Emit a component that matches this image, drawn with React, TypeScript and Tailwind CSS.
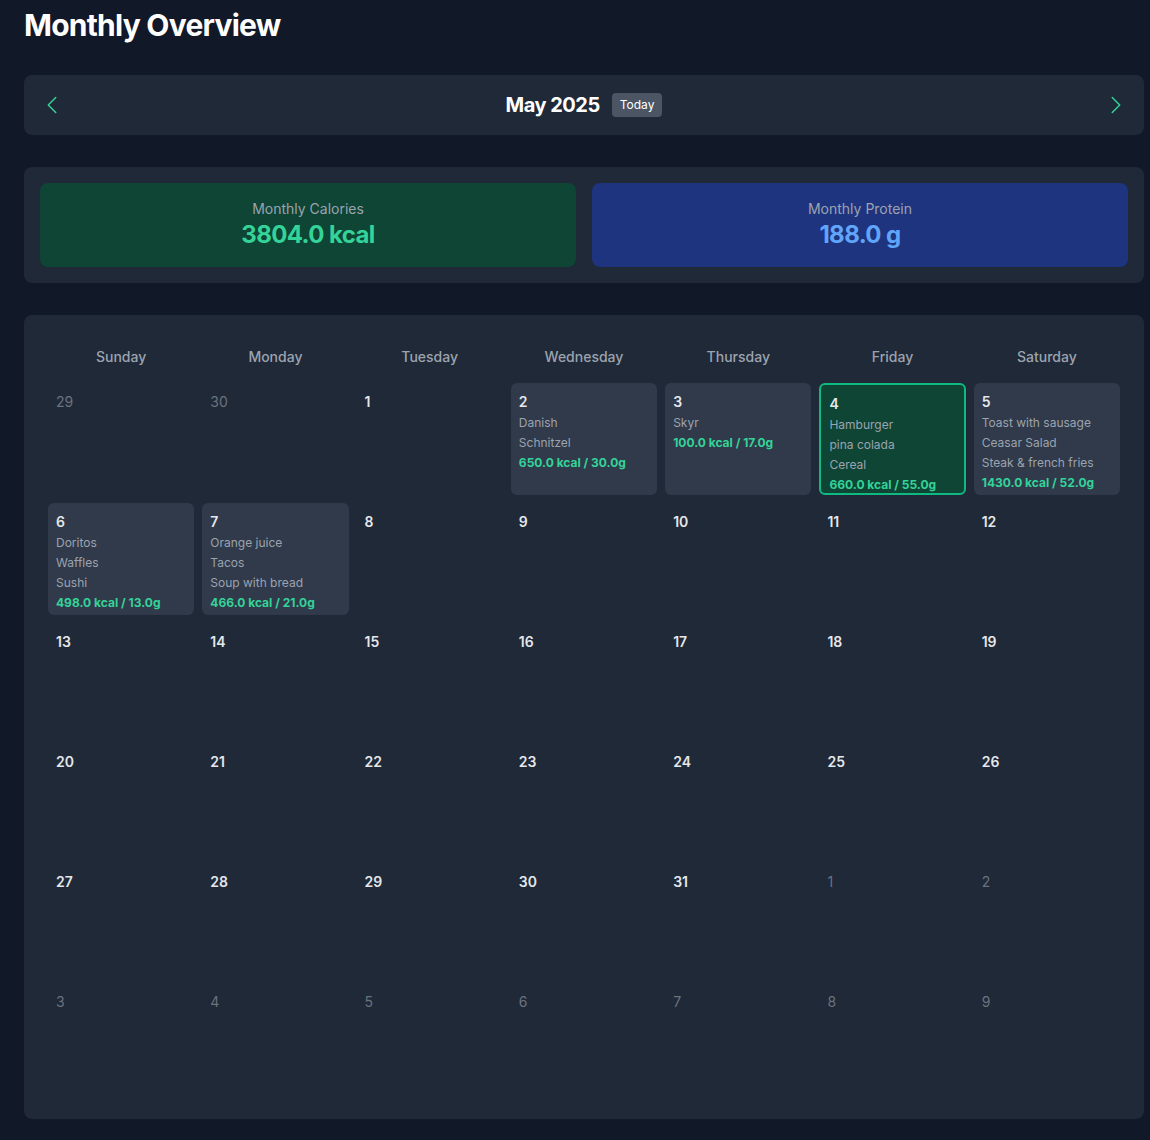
import React from 'react';

type Day = {
  day: number;
  inMonth: boolean;
  foods?: string[];
  kcal?: number;
  protein?: number;
  today?: boolean;
};

const weekDays = ['Sunday', 'Monday', 'Tuesday', 'Wednesday', 'Thursday', 'Friday', 'Saturday'];

// Meals logged per day of May 2025
const meals: { [day: number]: { foods: string[]; kcal: number; protein: number } } = {
  2: { foods: ['Danish', 'Schnitzel'], kcal: 650, protein: 30 },
  3: { foods: ['Skyr'], kcal: 100, protein: 17 },
  4: { foods: ['Hamburger', 'pina colada', 'Cereal'], kcal: 660, protein: 55 },
  5: { foods: ['Toast with sausage', 'Ceasar Salad', 'Steak & french fries'], kcal: 1430, protein: 52 },
  6: { foods: ['Doritos', 'Waffles', 'Sushi'], kcal: 498, protein: 13 },
  7: { foods: ['Orange juice', 'Tacos', 'Soup with bread'], kcal: 466, protein: 21 },
};

const buildDays = (): Day[] => {
  const days: Day[] = [];
  days.push({ day: 29, inMonth: false }, { day: 30, inMonth: false });
  for (let d = 1; d <= 31; d++) {
    const m = meals[d];
    days.push({ day: d, inMonth: true, ...(m || {}), today: d === 4 });
  }
  for (let d = 1; days.length < 42; d++) days.push({ day: d, inMonth: false });
  return days;
};

const ChevronLeft = () => (
  <svg xmlns="http://www.w3.org/2000/svg" fill="none" viewBox="0 0 24 24" strokeWidth={1.5} stroke="currentColor" className="w-6 h-6">
    <path strokeLinecap="round" strokeLinejoin="round" d="M15.75 19.5 8.25 12l7.5-7.5" />
  </svg>
);

const ChevronRight = () => (
  <svg xmlns="http://www.w3.org/2000/svg" fill="none" viewBox="0 0 24 24" strokeWidth={1.5} stroke="currentColor" className="w-6 h-6">
    <path strokeLinecap="round" strokeLinejoin="round" d="m8.25 4.5 7.5 7.5-7.5 7.5" />
  </svg>
);

const DayCell: React.FC<{ d: Day }> = ({ d }) => {
  const hasMeals = !!d.foods;
  let cls = 'h-[112px] rounded-md px-2 pt-[9px] pb-2';
  if (d.today) cls += ' border-2 border-[#10b981] bg-[#0e4535]';
  else if (hasMeals) cls += ' bg-[#303a4a]';
  return (
    <div className={cls}>
      <div className={d.inMonth ? 'text-sm leading-5 mb-px font-semibold text-[#e5e7eb]' : 'text-sm leading-5 mb-px text-[#6b7280]'}>{d.day}</div>
      {d.foods?.map(f => (
        <div key={f} className="text-xs leading-5 text-[#9ca3af]">{f}</div>
      ))}
      {hasMeals && (
        <div className="text-xs leading-5 font-bold text-[#34d399]">
          {d.kcal!.toFixed(1)} kcal / {d.protein!.toFixed(1)}g
        </div>
      )}
    </div>
  );
};

export default function App() {
  const days = buildDays();
  const totalKcal = Object.values(meals).reduce((a, m) => a + m.kcal, 0);
  const totalProtein = Object.values(meals).reduce((a, m) => a + m.protein, 0);

  return (
    <div className="min-h-screen bg-[#111827] text-white pt-[7px] pb-6" style={{ fontFamily: 'Inter, "Noto Sans", sans-serif' }}>
      <div className="ml-6 w-[1120px]">
        <h1 className="text-3xl font-bold tracking-tight mb-8">Monthly Overview</h1>

        <div className="bg-[#1f2937] rounded-lg p-4 flex items-center justify-between mb-8">
          <button className="text-[#34d399]"><ChevronLeft /></button>
          <div className="flex items-center gap-3">
            <span className="text-xl font-bold tracking-tight">May 2025</span>
            <span className="text-xs bg-[#4b5563] text-white px-2 py-1 rounded">Today</span>
          </div>
          <button className="text-[#34d399]"><ChevronRight /></button>
        </div>

        <div className="bg-[#1f2937] rounded-lg p-4 grid grid-cols-2 gap-4 mb-8">
          <div className="bg-[#0e4535] rounded-lg p-4 text-center">
            <div className="text-sm text-[#9ca3af]">Monthly Calories</div>
            <div className="text-2xl font-bold tracking-tight text-[#34d399]">{totalKcal.toFixed(1)} kcal</div>
          </div>
          <div className="bg-[#1e347f] rounded-lg p-4 text-center">
            <div className="text-sm text-[#9ca3af]">Monthly Protein</div>
            <div className="text-2xl font-bold tracking-tight text-[#60a5fa]">{totalProtein.toFixed(1)} g</div>
          </div>
        </div>

        <div className="bg-[#1f2937] rounded-lg p-6">
          <div className="grid grid-cols-7 gap-2">
            {weekDays.map(w => (
              <div key={w} className="py-2 text-center text-sm font-medium text-[#9ca3af]">{w}</div>
            ))}
            {days.map((d, i) => (
              <DayCell key={i} d={d} />
            ))}
          </div>
        </div>
      </div>
    </div>
  );
}
